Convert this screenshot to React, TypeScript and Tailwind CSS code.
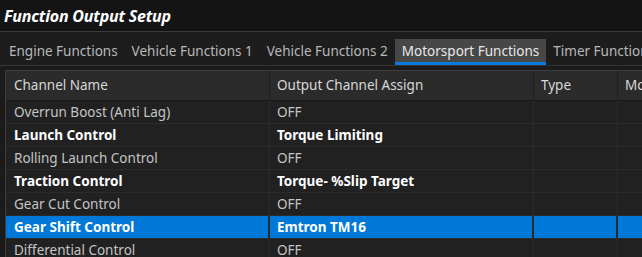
import React from 'react';

const TABS = [
  'Engine Functions',
  'Vehicle Functions 1',
  'Vehicle Functions 2',
  'Motorsport Functions',
  'Timer Functions',
];

const ROWS = [
  { name: 'Overrun Boost (Anti Lag)', output: 'OFF', bold: false },
  { name: 'Launch Control', output: 'Torque Limiting', bold: true },
  { name: 'Rolling Launch Control', output: 'OFF', bold: false },
  { name: 'Traction Control', output: 'Torque- %Slip Target', bold: true },
  { name: 'Gear Cut Control', output: 'OFF', bold: false },
  { name: 'Gear Shift Control', output: 'Emtron TM16', bold: true, selected: true },
  { name: 'Differential Control', output: 'OFF', bold: false },
];

const COLS = 'grid grid-cols-[264px_264px_84px_200px]';

export default function App() {
  return (
    <div
      className="w-[642px] h-[257px] overflow-hidden bg-[#1b1b1b] text-[13.5px]"
      style={{ fontFamily: '"Noto Sans", "Open Sans", sans-serif' }}
    >
      {/* Title */}
      <div className="h-[32px] bg-[#141414] flex items-center pl-[4px] border-b border-[#3a3a3a]">
        <h1 className="text-[16px] font-bold italic text-white tracking-[-0.2px]">Function Output Setup</h1>
      </div>

      {/* Tabs */}
      <div className="h-[34px] bg-[#1d1d1d] flex items-end pl-[2px] border-b border-[#333]">
        {TABS.map((t) => {
          const active = t === 'Motorsport Functions';
          return (
            <div
              key={t}
              className={
                active
                  ? 'h-[26px] px-[7px] pt-[1px] bg-[#474747] text-[#e8e8e8] border-b-[3px] border-[#0a7ae0] flex items-center whitespace-nowrap'
                  : 'h-[26px] px-[7px] pt-[1px] text-[#b8b8b8] border-b-[3px] border-transparent flex items-center whitespace-nowrap'
              }
            >
              {t}
            </div>
          );
        })}
      </div>

      {/* Table */}
      <div className="mt-[4px] ml-[5px] border-l border-t border-[#3c3c3c] w-[820px]">
        <div className={`${COLS} h-[30px] bg-[#2b2b2b] text-[#d8d8d8] border-b border-[#1a1a1a]`}>
          <div className="pl-[8px] flex items-center border-r border-[#1f1f1f]">Channel Name</div>
          <div className="pl-[7px] flex items-center border-r border-[#1f1f1f]">Output Channel Assign</div>
          <div className="pl-[7px] flex items-center border-r border-[#1f1f1f]">Type</div>
          <div className="pl-[7px] flex items-center">Mode</div>
        </div>
        {ROWS.map((r) => (
          <div
            key={r.name}
            className={`${COLS} h-[23px] border-b border-[#2b2b2b] ${
              r.selected ? 'bg-[#0078d7] text-white' : 'bg-[#212121]'
            } ${r.bold ? 'font-bold text-white' : 'text-[#c4c4c4]'}`}
          >
            <div className={`pl-[8px] flex items-center border-r ${r.selected ? 'border-[#2a2a2a] border-r-2' : 'border-[#2b2b2b]'}`}>
              {r.name}
            </div>
            <div className={`pl-[7px] flex items-center border-r ${r.selected ? 'border-[#2a2a2a] border-r-2' : 'border-[#2b2b2b]'}`}>
              {r.output}
            </div>
            <div className={`border-r ${r.selected ? 'border-[#2a2a2a] border-r-2' : 'border-[#2b2b2b]'}`} />
            <div />
          </div>
        ))}
      </div>
    </div>
  );
}
